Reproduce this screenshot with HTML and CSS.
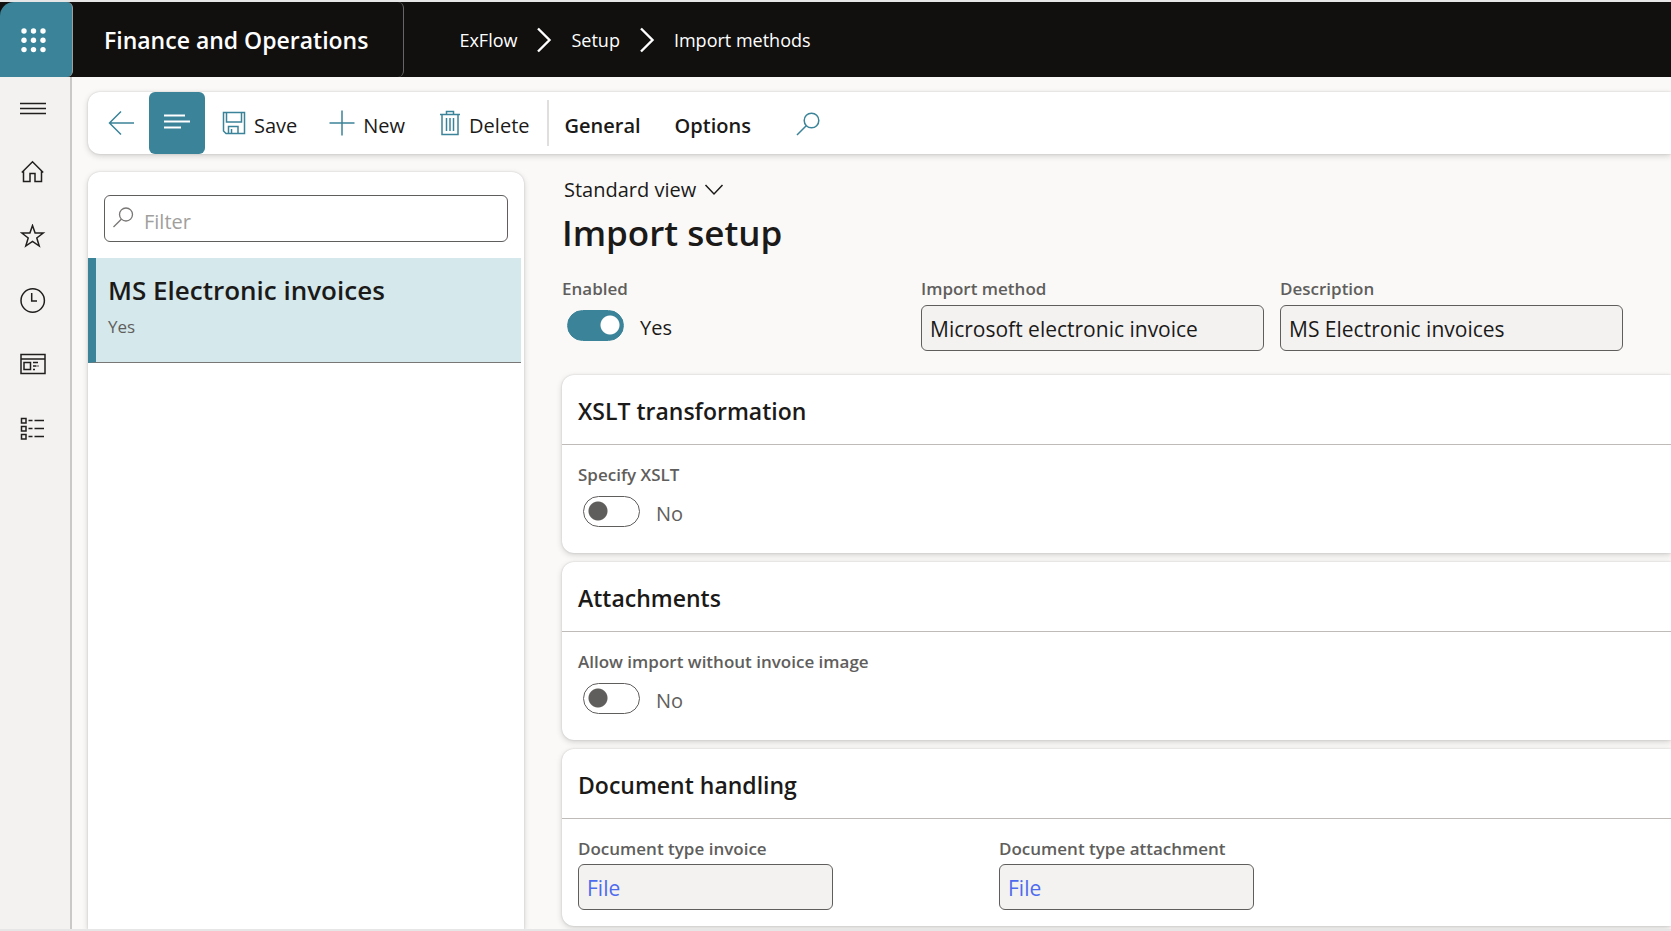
FILE: index.html
```html
<!DOCTYPE html>
<html lang="en">
<head>
<meta charset="utf-8">
<title>Import setup - Finance and Operations</title>
<meta name="viewport" content="width=device-width, initial-scale=1">
<link rel="stylesheet" href="styles.css">
</head>
<body>
<header class="topbar">
  <button class="launcher" type="button" aria-label="App launcher">
    <svg width="26" height="26" viewBox="0 0 26 26"><circle cx="4" cy="4" r="2.7"/><circle cx="13.500" cy="4" r="2.700"/><circle cx="23" cy="4" r="2.7"/><circle cx="4" cy="13.300" r="2.700"/><circle cx="13.500" cy="13.300" r="2.700"/><circle cx="23" cy="13.300" r="2.700"/><circle cx="4" cy="22.600" r="2.700"/><circle cx="13.500" cy="22.600" r="2.700"/><circle cx="23" cy="22.600" r="2.700"/></svg>
  </button>
  <a class="product" href="#">Finance and Operations</a>
  <nav class="crumbs" aria-label="Breadcrumb">
    <a href="#">ExFlow</a>
    <svg width="16" height="26" viewBox="0 0 16 26" fill="none" stroke="#fff" stroke-width="2.400"><path d="M2 1.500 13.500 13 2 24.500"/></svg>
    <a href="#">Setup</a>
    <svg width="16" height="26" viewBox="0 0 16 26" fill="none" stroke="#fff" stroke-width="2.400"><path d="M2 1.500 13.500 13 2 24.500"/></svg>
    <a href="#">Import methods</a>
  </nav>
</header>
<div class="shell">
  <nav class="rail" aria-label="Main">
    <button type="button" aria-label="Expand navigation"><svg width="26" height="26" viewBox="0 0 26 26"><path d="M0 7.500h26M0 12.500h26M0 17.500h26"/></svg></button>
    <button type="button" aria-label="Home"><svg width="26" height="26" viewBox="0 0 26 26"><path d="M1.800 12.500 12.500 1.800 23.200 12.500M3.500 11V21.500H10V13.500h5v8h6.500V11"/></svg></button>
    <button type="button" aria-label="Favorites"><svg width="26" height="26" viewBox="0 0 26 26"><path d="M12.500 1.500 15.100 9H23.200L16.800 14 19.200 22 12.500 17.300 5.800 22 8.200 14 1.800 9H9.900Z"/></svg></button>
    <button type="button" aria-label="Recent"><svg width="26" height="26" viewBox="0 0 26 26"><circle cx="12.700" cy="12.500" r="11.700"/><path d="M11.700 5V13H17"/></svg></button>
    <button type="button" aria-label="Workspaces"><svg width="26" height="26" viewBox="0 0 26 26"><path d="M1 2.500H25V21.500H1ZM1 7H25M4 10.500H10.500V17.500H4ZM13 10.500h5M13 14h3.500M13 17.500h2M17.500 14h1"/></svg></button>
    <button type="button" aria-label="Modules"><svg width="26" height="26" viewBox="0 0 26 26"><path d="M1.500 2.500h4.500v4.500H1.500ZM1.500 10.500h4.500v4.500H1.500ZM1.500 18.500h4.500v4.500H1.500ZM8.500 4.500h4M14.500 4.500H24M8.500 12.500h4M14.500 12.500H24M8.500 20.500h4M14.500 20.500H24"/></svg></button>
  </nav>
  <div class="workspace">
    <div class="commandbar" role="toolbar" aria-label="Actions">
      <button class="cmd back" type="button" aria-label="Back"><svg width="26" height="26" viewBox="0 0 26 26"><path d="M13 1.500 1.500 13 13 24.500M1.500 13H26"/></svg></button>
      <button class="cmd listtoggle" type="button" aria-label="Show list"><svg width="26" height="26" viewBox="0 0 26 26"><path d="M0 6.500h21M0 12.500h26M0 18.500h17"/></svg></button>
      <button class="cmd save" type="button"><svg width="24" height="26" viewBox="0 0 24 26"><path d="M1.500 2.500H22.500V23.500H4L1.500 21ZM4.500 2.500V12H19.500V2.500M6.500 23.500V16.500H16V23.500M9.500 19v4.500"/></svg><span>Save</span></button>
      <button class="cmd new" type="button"><svg width="26" height="26" viewBox="0 0 26 26"><path d="M13 .5V25.500M.5 13H25.500"/></svg><span>New</span></button>
      <button class="cmd delete" type="button"><svg width="22" height="26" viewBox="0 0 22 26"><path d="M1 4.500H21M3 4.500V24.500H19V4.500M7.500 4.500V1.500H14.500V4.500M7.500 8V21M11 8V21M14.500 8V21"/></svg><span>Delete</span></button>
      <span class="divider"></span>
      <button class="cmd tab" type="button"><span>General</span></button>
      <button class="cmd tab" type="button"><span>Options</span></button>
      <button class="cmd find" type="button" aria-label="Search actions"><svg width="24" height="26" viewBox="0 0 24 26"><circle cx="15.500" cy="10.500" r="7.300"/><path d="M10.200 15.700 1 25"/></svg></button>
    </div>
    <div class="columns">
      <aside class="listpane">
        <label class="filter">
          <svg width="22" height="24" viewBox="0 0 22 24"><circle cx="13" cy="8.500" r="6.500"/><path d="M8.300 13.200 .5 21"/></svg>
          <input type="text" placeholder="Filter" aria-label="Filter">
        </label>
        <button class="record" type="button">
          <span class="record-title">MS Electronic invoices</span>
          <span class="record-sub">Yes</span>
        </button>
      </aside>
      <main class="details">
        <button class="view" type="button">Standard view <svg width="20" height="14" viewBox="0 0 20 14"><path d="M1.500 2 10 11 18.500 2"/></svg></button>
        <h1>Import setup</h1>
        <div class="header-fields">
          <div class="field">
            <label for="enabled">Enabled</label>
            <div class="toggle"><input id="enabled" type="checkbox" role="switch" checked><span>Yes</span></div>
          </div>
          <div class="field">
            <label for="method">Import method</label>
            <input id="method" class="box" type="text" value="Microsoft electronic invoice" readonly>
          </div>
          <div class="field">
            <label for="description">Description</label>
            <input id="description" class="box" type="text" value="MS Electronic invoices" readonly>
          </div>
        </div>
        <div class="cards">
          <section class="card">
            <h2>XSLT transformation</h2>
            <div class="card-body">
              <div class="field">
                <label for="xslt">Specify XSLT</label>
                <div class="toggle off"><input id="xslt" type="checkbox" role="switch"><span>No</span></div>
              </div>
            </div>
          </section>
          <section class="card">
            <h2>Attachments</h2>
            <div class="card-body">
              <div class="field">
                <label for="noimage">Allow import without invoice image</label>
                <div class="toggle off"><input id="noimage" type="checkbox" role="switch"><span>No</span></div>
              </div>
            </div>
          </section>
          <section class="card">
            <h2>Document handling</h2>
            <div class="card-body pair">
              <div class="field">
                <label for="doc-invoice">Document type invoice</label>
                <input id="doc-invoice" class="box short" type="text" value="File" readonly>
              </div>
              <div class="field">
                <label for="doc-attachment">Document type attachment</label>
                <input id="doc-attachment" class="box short" type="text" value="File" readonly>
              </div>
            </div>
          </section>
        </div>
      </main>
    </div>
  </div>
</div>
</body>
</html>
```

FILE: styles.css
```css
:root {
  --teal: #3b8398;
  --ink: #1b1a19;
  --muted: #605e5c;
  --canvas: #faf9f8;
  --panel-shadow: 0 2px 6px rgba(0, 0, 0, .16), 0 0 2px rgba(0, 0, 0, .16);
}

* { box-sizing: border-box; }

body {
  margin: 0;
  min-height: 100vh;
  display: flex;
  flex-direction: column;
  border-top: 2px solid #e6e6e6;
  border-bottom: 2px solid #e6e6e6;
  background: var(--canvas);
  color: var(--ink);
  font-family: "Open Sans", "Noto Sans", sans-serif;
  font-size: 20px;
  line-height: 28px;
}

button, input { font: inherit; color: inherit; }
button { border: 0; padding: 0; background: none; text-align: left; }
a { color: inherit; text-decoration: none; }
svg { flex: none; fill: none; }

.topbar {
  display: flex;
  height: 75px;
  background: #11100f;
  color: #fff;
}

.launcher {
  width: 73px;
  padding-left: 20px;
  display: flex;
  align-items: center;
  border-right: 1px solid #a0a0a0;
  border-radius: 14px 6px 6px 0;
  background: var(--teal);
}

.launcher svg { fill: #fff; }

.product {
  display: flex;
  align-items: center;
  padding: 0 35px 0 31px;
  border-right: 1px solid #666;
  border-radius: 0 6px 6px 0;
  font-size: 23px;
  font-weight: 600;
}

.crumbs {
  display: flex;
  align-items: center;
  gap: 19px;
  padding-left: 55px;
  font-size: 18px;
}

.shell { flex: 1; display: flex; }

.rail {
  width: 72px;
  display: flex;
  flex-direction: column;
  border-right: 2px solid #cac9c8;
  background: #f3f2f1;
}

.rail button {
  height: 64px;
  padding-left: 20px;
  display: flex;
  align-items: center;
}

.rail svg { stroke: #201f1e; stroke-width: 1.5; }

.workspace {
  flex: 1;
  min-width: 0;
  display: flex;
  flex-direction: column;
  gap: 18px;
  padding: 15px 0 0 16px;
  overflow: hidden;
}

.commandbar {
  height: 62px;
  display: flex;
  align-items: stretch;
  border-radius: 12px 0 0 12px;
  background: #fff;
  box-shadow: var(--panel-shadow);
}

.cmd {
  display: flex;
  align-items: center;
  gap: 8px;
  padding-bottom: 1px;
}

.cmd svg { stroke: var(--teal); stroke-width: 1.5; }
.cmd span { padding-top: 7px; }
.back { padding-left: 20px; }
.listtoggle { margin-left: 15px; padding: 0 15px 3px; border-radius: 6px; background: var(--teal); }
.listtoggle svg { stroke: #fff; stroke-width: 2; }
.save { margin-left: 17px; }
.new { margin-left: 32px; }
.delete { margin-left: 34px; }
.divider { width: 2px; margin: 8px 0 8px 17px; background: #e1dfdd; }
.tab { margin-left: 16px; font-weight: 600; }
.tab + .tab { margin-left: 34px; }
.find { margin-left: 45px; }

.columns { flex: 1; display: flex; gap: 38px; }

.listpane {
  width: 436px;
  padding-top: 23px;
  border-radius: 12px 12px 0 0;
  background: #fff;
  box-shadow: var(--panel-shadow);
}

.filter {
  height: 47px;
  margin: 0 16px;
  display: flex;
  align-items: flex-start;
  gap: 9px;
  padding: 10px 8px 0;
  border: 1px solid var(--muted);
  border-radius: 6px;
}

.filter svg { stroke: #797775; stroke-width: 1.3; }
.filter input { flex: 1; min-width: 0; height: 30px; padding: 0; border: 0; outline: 0; background: none; }
.filter input::placeholder { color: #a19f9d; opacity: 1; }

.record {
  width: 433px;
  height: 105px;
  margin-top: 16px;
  padding: 15px 0 0 12px;
  display: flex;
  flex-direction: column;
  align-items: flex-start;
  gap: 8px;
  border-left: 8px solid var(--teal);
  border-bottom: 1px solid #797775;
  background: #d5e8eb;
}

.record-title { font-size: 26px; line-height: 34px; font-weight: 600; }
.record-sub { font-size: 17px; line-height: 24px; color: var(--muted); }

.details { flex: 1; min-width: 0; padding-top: 4px; }
.view { display: flex; align-items: center; gap: 8px; padding-left: 2px; }
.view svg { stroke: var(--ink); stroke-width: 1.5; }

h1 { margin: 7px 0 0; font-size: 35px; line-height: 44px; font-weight: 600; }

.header-fields {
  display: grid;
  grid-template-columns: repeat(3, minmax(0, 343px));
  gap: 16px;
  margin-top: 22px;
}

.field { display: flex; flex-direction: column; }
.field label { font-size: 17px; line-height: 24px; font-weight: 600; color: var(--muted); }

.box {
  height: 46px;
  margin-top: 4px;
  padding: 2px 8px 0;
  border: 1px solid var(--muted);
  border-radius: 6px;
  background: #f3f2f1;
  font-size: 21px;
}

.box.short { width: 255px; margin-top: 3px; color: #4f6bed; }

.toggle { display: flex; gap: 16px; margin: 9px 0 0 5px; }

.toggle input {
  appearance: none;
  flex: none;
  width: 57px;
  height: 31px;
  margin: 0;
  border: 1px solid var(--muted);
  border-radius: 16px;
  background: radial-gradient(circle at 14px 14px, var(--muted) 9px, transparent 10px);
}

.toggle input:checked {
  border-color: var(--teal);
  background: radial-gradient(circle at 42px 14px, #fff 9px, var(--teal) 10px);
}

.toggle span { padding-top: 4px; }
.toggle.off span { color: var(--muted); }

.cards { display: grid; gap: 9px; margin-top: 24px; }

.card {
  border-radius: 12px 0 0 12px;
  background: #fff;
  box-shadow: var(--panel-shadow);
}

h2 {
  margin: 0;
  padding: 20px 16px 17px;
  border-bottom: 1px solid #bebbb8;
  font-size: 23px;
  line-height: 32px;
  font-weight: 600;
}

.card-body { min-height: 108px; padding: 18px 16px 16px; }
.pair { min-height: 0; display: grid; grid-template-columns: repeat(2, minmax(0, 405px)); gap: 16px; }
```
